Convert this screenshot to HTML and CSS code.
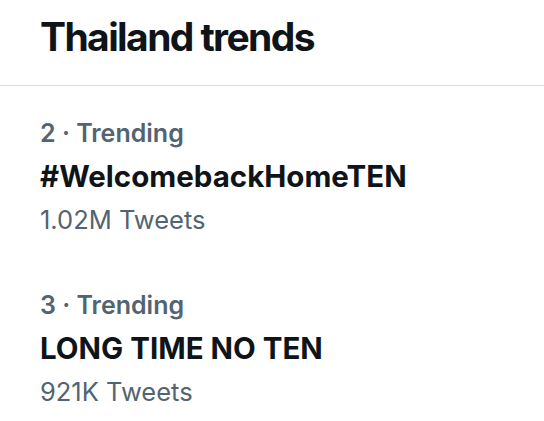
FILE: index.html
```html
<!DOCTYPE html>
<html>
<head>
<meta charset="utf-8">
<link rel="stylesheet" href="styles.css">
</head>
<body>
<div class="panel">
  <header class="head"><h1 class="title">Thailand trends</h1></header>
  <ul class="trends">
    <li class="trend">
      <div class="meta">2 · Trending</div>
      <div class="name">#WelcomebackHomeTEN</div>
      <div class="count">1.02M Tweets</div>
    </li>
    <li class="trend">
      <div class="meta">3 · Trending</div>
      <div class="name">LONG TIME NO TEN</div>
      <div class="count">921K Tweets</div>
    </li>
  </ul>
</div>
</body>
</html>
```
FILE: styles.css
```css
html, body { margin: 0; padding: 0; background: #fff; }
body { font-family: Inter, "Liberation Sans", sans-serif; color: #0f1419; }
.panel { width: 544px; height: 421px; overflow: hidden; }
.head { border-bottom: 1px solid #dcdcdc; padding: 12px 40px 0; height: 86px; box-sizing: border-box; }
.title { margin: 0; font-size: 39px; line-height: 50px; font-weight: 700; letter-spacing: -1.6px; }
.trends { list-style: none; margin: 0; padding: 0; }
.trend { padding: 27px 40px 0; height: 172px; box-sizing: border-box; display: flex; flex-direction: column; }
.meta { color: #536471; font-size: 25px; line-height: 40px; font-weight: 600; }
.name { font-size: 29.5px; line-height: 46px; font-weight: 700; }
.count { color: #536471; font-size: 25.5px; line-height: 42px; font-weight: 400; }
```
